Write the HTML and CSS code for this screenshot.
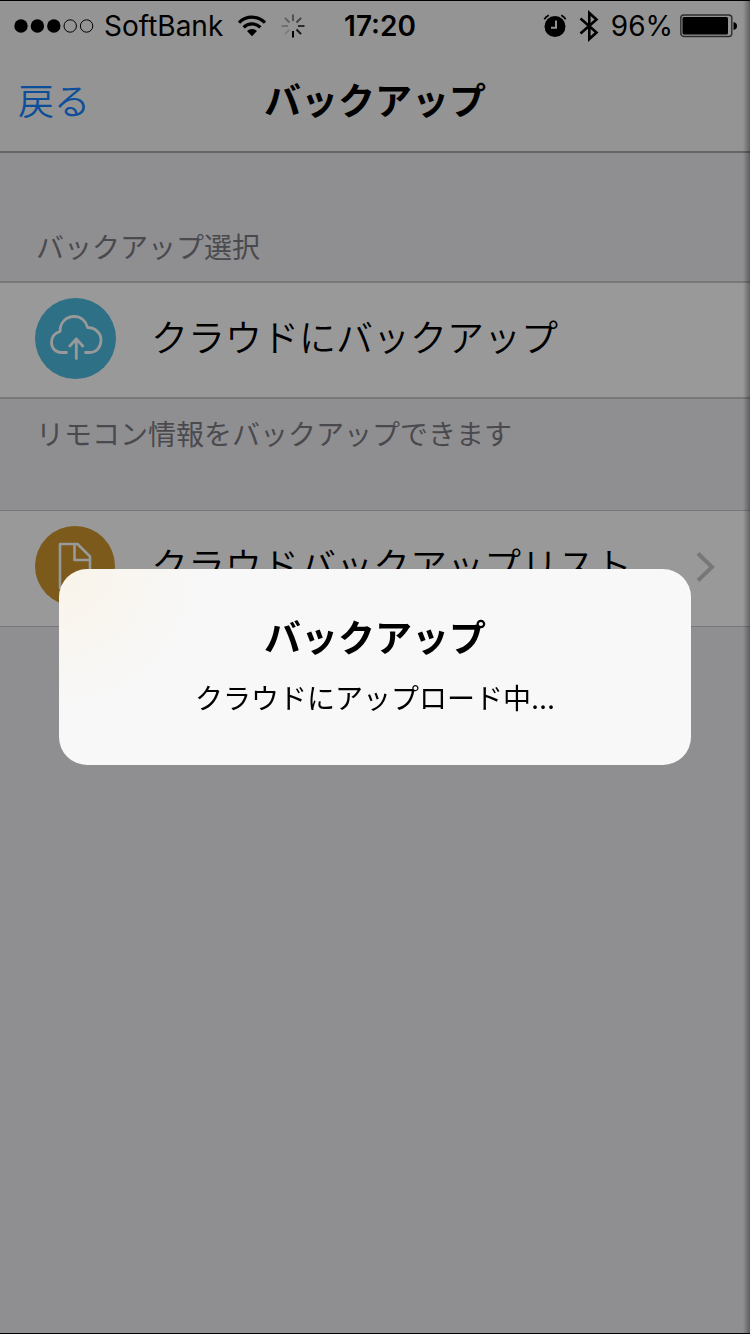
FILE: index.html
```html
<!DOCTYPE html>
<html lang="ja">

<head>
    <meta charset="UTF-8">
    <meta name="viewport" content="width=device-width, initial-scale=1.0">
    <title>バックアップ</title>
    <link rel="stylesheet" href="styles.css">
</head>

<body>
    <div class="screen">
        <header class="top">
            <div class="status-bar">
                <div class="status-left">
                    <svg class="signal" width="80" height="14" viewBox="0 0 80 14">
                        <circle cx="7" cy="7" r="6.7"/>
                        <circle cx="23.4" cy="7" r="6.7"/>
                        <circle cx="39.8" cy="7" r="6.7"/>
                        <circle cx="56.2" cy="7" r="6.2" fill="none" stroke="#000"/>
                        <circle cx="72.6" cy="7" r="6.2" fill="none" stroke="#000"/>
                    </svg>
                    <span class="carrier">SoftBank</span>
                    <svg class="wifi" width="30" height="22" viewBox="0 0 30 22">
                        <g fill="none" stroke="#000" stroke-width="3.2">
                            <path d="M2 7.6a18.4 18.4 0 0 1 26 0"/>
                            <path d="M6.6 12.4a11.8 11.8 0 0 1 16.8 0"/>
                        </g>
                        <path d="M15 21.2l-5-5.2a7.2 7.2 0 0 1 10 0z"/>
                    </svg>
                    <svg class="spinner" width="24" height="24" viewBox="0 0 24 24" stroke="#000" stroke-width="2">
                        <path d="M12 0.5v6.5" opacity=".45"/>
                        <path d="M20.1 3.9l-4.6 4.6" opacity=".55"/>
                        <path d="M23.5 12h-6.5" opacity=".7"/>
                        <path d="M20.1 20.1l-4.6-4.6" opacity=".85"/>
                        <path d="M12 23.5v-6.5"/>
                        <path d="M3.9 20.1l4.6-4.6" opacity=".15"/>
                        <path d="M0.5 12h6.5" opacity=".25"/>
                        <path d="M3.9 3.9l4.6 4.6" opacity=".35"/>
                    </svg>
                </div>
                <time class="clock">17:20</time>
                <div class="status-right">
                    <svg class="alarm" width="24" height="24" viewBox="0 0 24 24">
                        <circle cx="12" cy="12.500" r="10.500"/>
                        <path d="M1.3 5.2a13 13 0 0 1 4.500-3.900M22.7 5.2a13 13 0 0 0-4.500-3.900" fill="none" stroke="#000" stroke-width="1.8"/>
                        <path d="M13 6.500v7.200H8" fill="none" stroke="#f7f7f7" stroke-width="2"/>
                    </svg>
                    <svg class="bluetooth" width="20" height="32" viewBox="0 0 20 32">
                        <path d="M1.5 8.5L17.5 22.5L10.3 29V3L17.5 9.5L1.5 23.5" fill="none" stroke="#000" stroke-width="2.6"/>
                    </svg>
                    <span class="percent">96%</span>
                    <svg class="battery" width="57" height="24" viewBox="0 0 57 24">
                        <rect x=".8" y="1" width="51" height="21.5" rx="3" fill="none" stroke="#000" stroke-opacity=".7" stroke-width="1.4"/>
                        <rect x="2.5" y="3" width="45.5" height="17.5" rx="1.5"/>
                        <path d="M53.5 8c2 .3 3.5 1.500 3.500 4s-1.500 3.700-3.500 4z"/>
                    </svg>
                </div>
            </div>
            <div class="nav-bar">
                <button type="button" class="back-btn">戻る</button>
                <h1>バックアップ</h1>
            </div>
        </header>

        <main>
            <h2 class="section-title">バックアップ選択</h2>
            <button type="button" class="row row-thick">
                <svg class="row-icon" width="82" height="82" viewBox="0 0 82 82">
                    <circle cx="40.5" cy="40.5" r="40.5" fill="#4dbbdf"/>
                    <g fill="none" stroke="#fff" stroke-width="2.8" stroke-linecap="round" stroke-linejoin="round">
                        <path d="M31.500 54.500H26C20.500 54.500 16.500 50 16.500 44.500C16.500 39 20 35 25 33.500C25 24.500 31 18.500 39 18.500C46 18.500 51 23 52.500 29.500C60 29.500 66 35 66 42C66 49 61.500 54.500 55 54.500H50.500"/>
                        <path d="M41.300 60.500V41M34.800 48L41.300 41L47.800 48"/>
                    </g>
                </svg>
                <span class="row-label">クラウドにバックアップ</span>
            </button>
            <p class="section-note">リモコン情報をバックアップできます</p>

            <button type="button" class="row">
                <svg class="row-icon" width="82" height="82" viewBox="0 0 82 82">
                    <circle cx="40" cy="40" r="40" fill="#cd962f"/>
                    <g fill="none" stroke="#fff" stroke-width="2.600" stroke-linejoin="round">
                        <path d="M25 18h17.500L55 30.500V62H25z"/>
                        <path d="M39.500 18V34H55"/>
                    </g>
                </svg>
                <span class="row-label">クラウドバックアップリスト</span>
                <svg class="chevron" width="20" height="32" viewBox="0 0 20 32">
                    <path d="M2 2.500L16 16L2 29.500" fill="none" stroke="#c7c7cc" stroke-width="4"/>
                </svg>
            </button>
        </main>
    </div>

    <div class="overlay">
        <div class="alert" role="dialog" aria-labelledby="alert-title">
            <h2 id="alert-title" class="alert-title">バックアップ</h2>
            <p class="alert-text">クラウドにアップロード中...</p>
        </div>
    </div>
</body>

</html>
```
FILE: styles.css
```css
:root {
    --page: #efeff4;
    --bar: #f7f7f7;
    --line: #c8c7cc;
    --gray-text: #7c7c82;
    --tint: #1482ff;
}

* {
    box-sizing: border-box;
}

body {
    margin: 0;
    min-height: 100vh;
    background: var(--page);
    color: #000;
    font-family: "Inter", "Noto Sans CJK JP", sans-serif;
}

h1,
h2,
p {
    margin: 0;
}

button {
    padding: 0;
    border: none;
    background: none;
    color: inherit;
    font-family: inherit;
    cursor: pointer;
}

/* ステータスバー */
.top {
    background: var(--bar);
    border-bottom: 2px solid #a7a7aa;
}

.status-bar {
    display: grid;
    grid-template-columns: 1fr auto 1fr;
    align-items: center;
    height: 52px;
    padding: 0 13px 0 14px;
    font-size: 28px;
    line-height: 32px;
}

.status-left,
.status-right {
    display: flex;
    align-items: center;
}

.carrier {
    margin: 0 14px 0 10px;
}

.spinner {
    margin-left: 14px;
}

.clock {
    padding-left: 9px;
    font-weight: 600;
}

.status-right {
    justify-content: flex-end;
}

.bluetooth {
    margin: 0 12px 0 12px;
}

.battery {
    margin-left: 7px;
}

/* ナビゲーションバー */
.nav-bar {
    display: grid;
    grid-template-columns: 1fr auto 1fr;
    align-items: center;
    height: 99px;
    padding: 0 18px;
}

.back-btn {
    justify-self: start;
    color: var(--tint);
    font-size: 36px;
    line-height: 48px;
    font-weight: 350;
}

.nav-bar h1 {
    font-size: 37px;
    line-height: 48px;
    font-weight: 700;
}

/* リスト */
.section-title,
.section-note {
    padding: 0 36px;
    color: var(--gray-text);
    font-size: 28px;
    line-height: 36px;
    font-weight: 400;
}

.section-title {
    padding-top: 77px;
    padding-bottom: 15px;
}

.section-note {
    padding-top: 18px;
    padding-bottom: 57px;
}

.row {
    display: flex;
    align-items: center;
    width: 100%;
    padding: 15px 34px 18px 35px;
    background: #fff;
    border-top: 1px solid var(--line);
    border-bottom: 1px solid var(--line);
    text-align: left;
}

.row-thick {
    padding-bottom: 17px;
    border-width: 2px 0;
}

.row-icon {
    flex: none;
}

.row-label {
    flex: 1;
    margin-left: 34px;
    font-size: 37px;
    line-height: 48px;
    font-weight: 350;
}

/* アラート */
.overlay {
    position: fixed;
    inset: 0;
    display: flex;
    align-items: center;
    justify-content: center;
    padding: 0 59px;
    background: linear-gradient(to left, rgba(0, 0, 0, 0.35), transparent 7px), rgba(0, 0, 0, 0.4);
    border-top: 1px solid #000;
    border-bottom: 1px solid #000;
}

.alert {
    flex: 1;
    padding: 46px 32px 46px;
    background: radial-gradient(circle at 0 0, #faf4e9, #f8f8f9 150px);
    border-radius: 28px;
    text-align: center;
}

.alert-title {
    font-size: 37px;
    line-height: 48px;
    font-weight: 700;
}

.alert-text {
    margin-top: 16px;
    font-size: 28px;
    line-height: 40px;
}
```
